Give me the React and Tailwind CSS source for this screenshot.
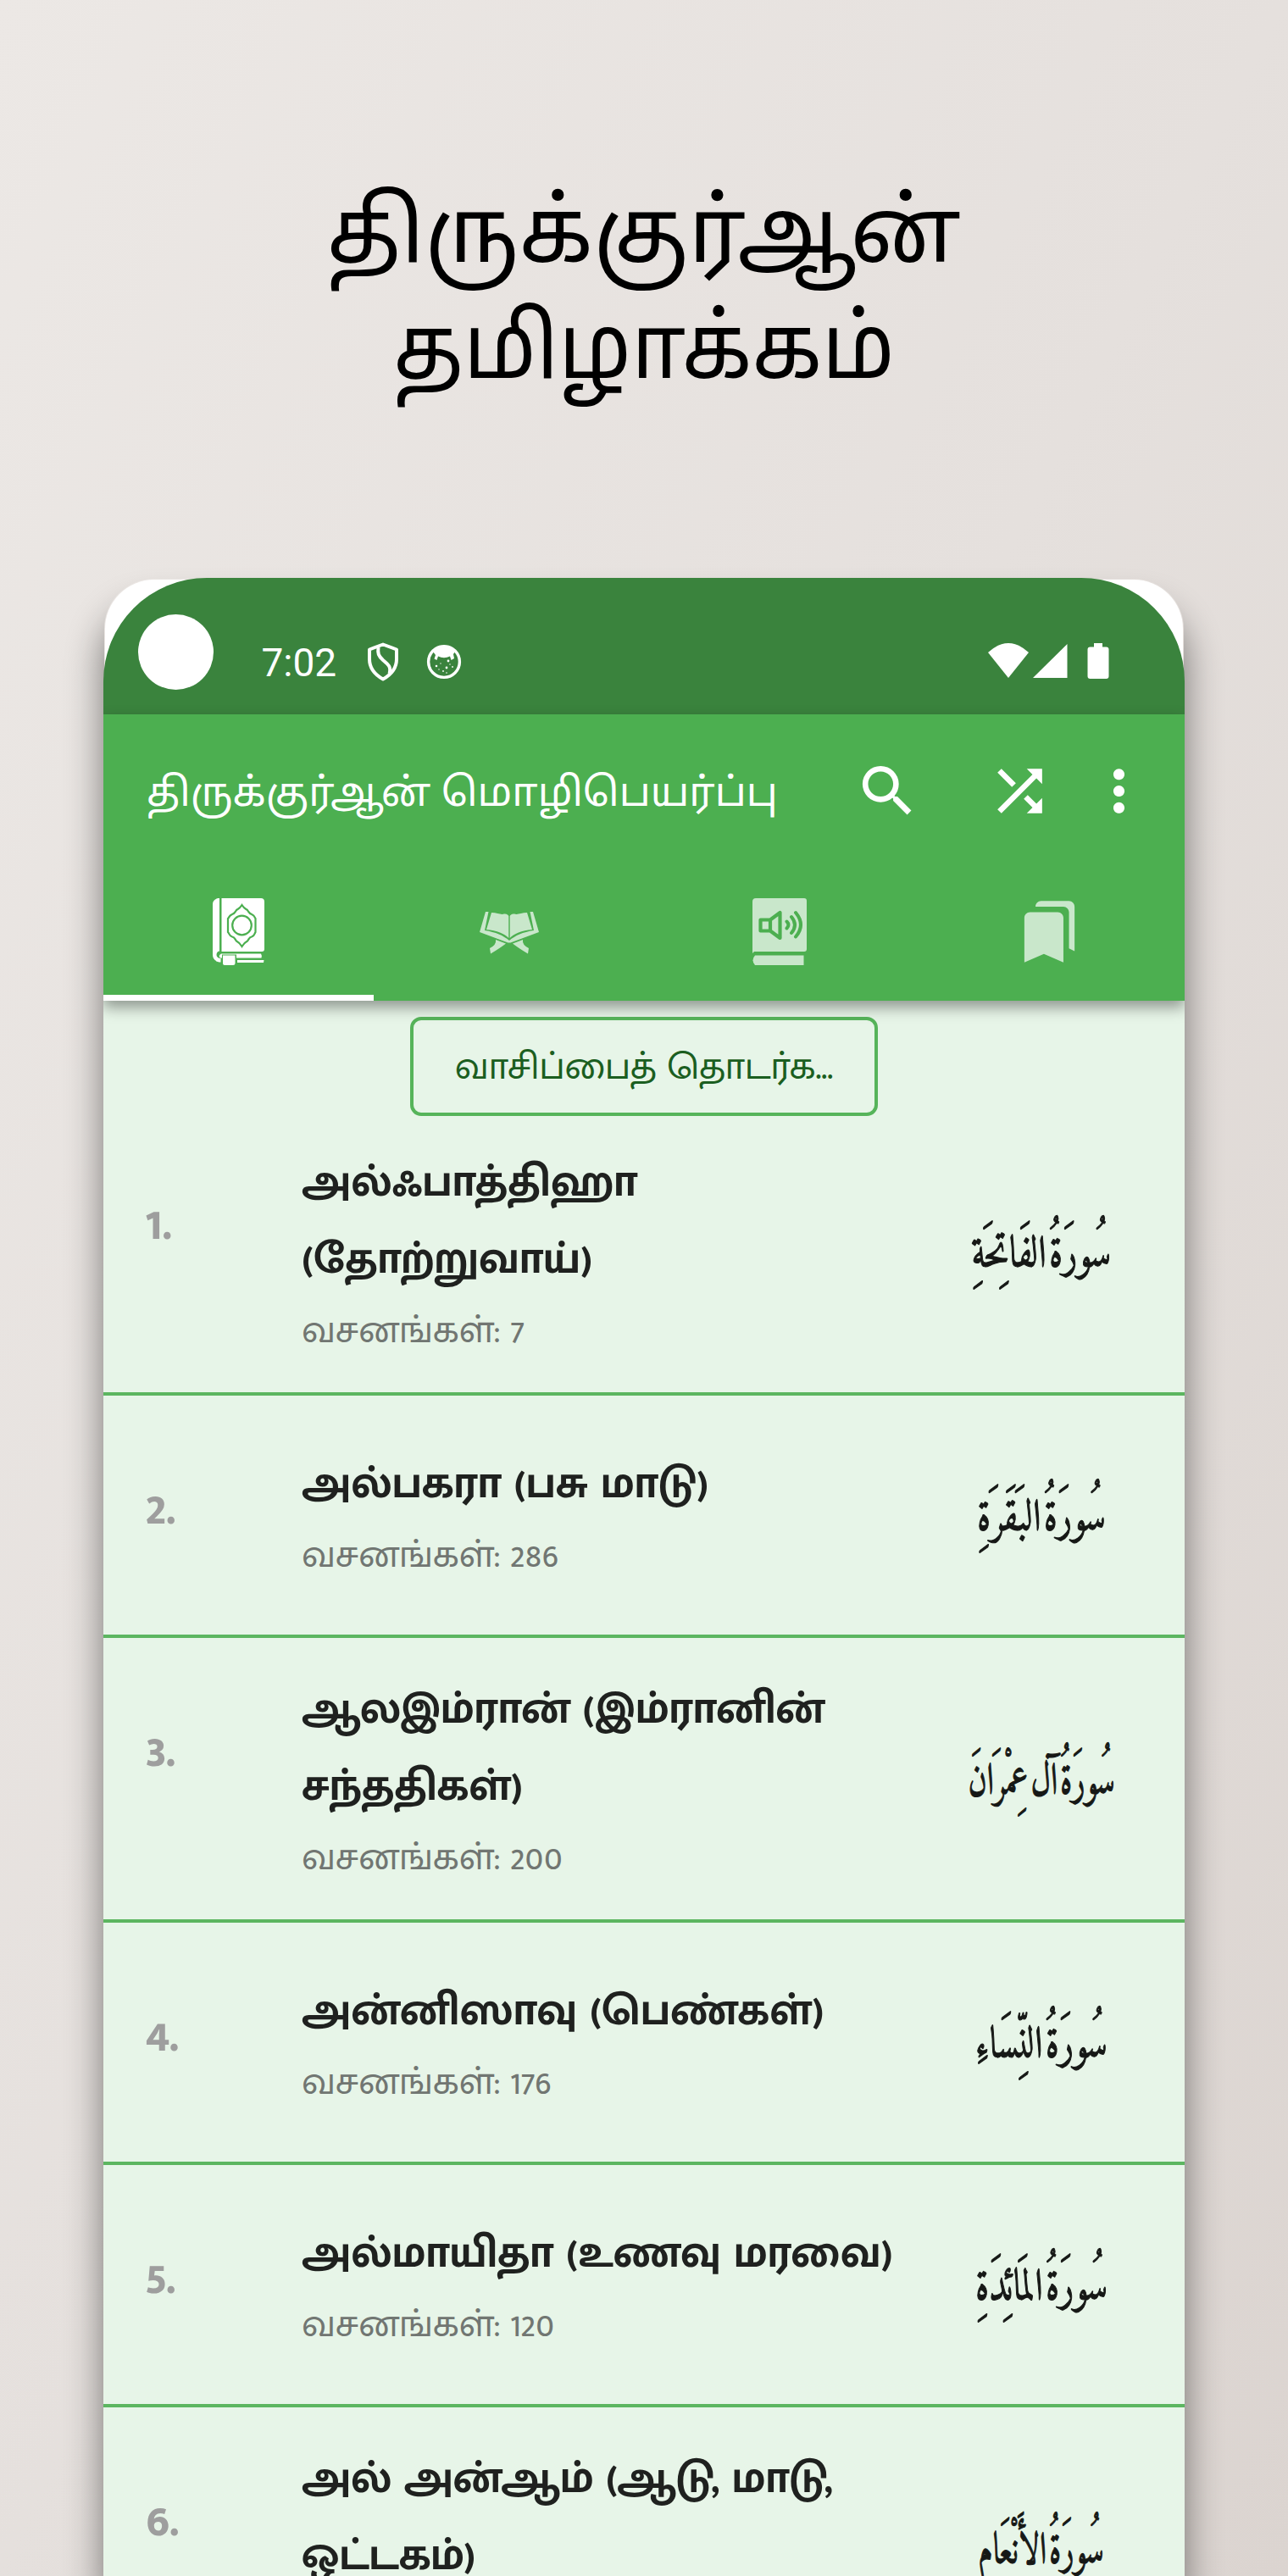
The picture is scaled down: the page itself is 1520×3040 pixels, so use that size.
import { MdBookmarks, MdMoreVert, MdSearch, MdShuffle } from "react-icons/md";

const surahs = [
  { no: 1, name: ["அல்ஃபாத்திஹா", "(தோற்றுவாய்)"], verses: 7, arabic: "سُورَةُ الفَاتِحَةِ" },
  { no: 2, name: ["அல்பகரா (பசு மாடு)"], verses: 286, arabic: "سُورَةُ البَقَرَةِ" },
  { no: 3, name: ["ஆலஇம்ரான் (இம்ரானின்", "சந்ததிகள்)"], verses: 200, arabic: "سُورَةُ آل عِمْرَانَ", narrow: true },
  { no: 4, name: ["அன்னிஸாவு (பெண்கள்)"], verses: 176, arabic: "سُورَةُ النِّسَاءِ" },
  { no: 5, name: ["அல்மாயிதா (உணவு மரவை)"], verses: 120, arabic: "سُورَةُ المَائِدَةِ" },
  { no: 6, name: ["அல் அன்ஆம் (ஆடு, மாடு,", "ஒட்டகம்)"], verses: 165, arabic: "سُورَةُ الأَنْعَامِ", narrow: true },
];

function ShieldIcon() {
  return (
    <svg width="38" height="46" viewBox="0 0 38 46" fill="none" stroke="white" strokeWidth="4" strokeLinejoin="round">
      <path d="M19 2.500 35 8.500V20C35 31 28 38.500 19 43.500 10 38.500 3 31 3 20V8.500Z" />
      <path d="M13.500 6C12.500 13 13.500 16 19 21C25 26 29 29 26.500 37" />
    </svg>
  );
}

function FaceIcon() {
  return (
    <svg width="42" height="42" viewBox="0 0 42 42">
      <circle cx="21" cy="21" r="18.4" fill="none" stroke="white" strokeWidth="3.4" />
      <path d="M8 9C14 1 28 1 34 9L32 12 33 17 29.500 19 28 14.500Q21 18 14 14.500L12.500 19 9.500 17.500 11 13Z" fill="white" />
      <g fill="white">
        <circle cx="12" cy="26" r="1.300" /><circle cx="17" cy="23" r=".7" /><circle cx="26" cy="20" r="1.400" />
        <circle cx="24" cy="28" r="1.400" /><circle cx="31" cy="27" r=".9" /><circle cx="20" cy="32" r=".9" />
        <circle cx="15" cy="30" r=".7" /><circle cx="28" cy="24" r=".7" /><circle cx="24" cy="34" r=".8" />
      </g>
    </svg>
  );
}

function QuranIcon() {
  return (
    <svg width="61" height="79" viewBox="0 0 61 79">
      <path d="M8 0C3 0 0 3 0 7V67C0 72 4 75.500 9.500 75.500V71C6.500 71 4.500 69 4.500 67 4.500 64 6 62.500 8 62.500Z" fill="white" />
      <path d="M10.500 0H57C59.500 0 61 1.500 61 4V60Q61 63 58 63H10.500Z" fill="white" />
      <path d="M10 65.500H57Q58.500 68 57.500 70.500H28V66.500H11V70.500H9Q6 68 10 65.500Z" fill="white" />
      <path d="M12 67.500H26.500V77Q26.500 79 24 79H14Q12 79 12 77Z" fill="white" />
      <path d="M29 73H60.500L60 76H29Z" fill="white" />
      <path d="M34.500 8C37 12 38 12 41 14 43 17 43 18 46 19 50 21 49 22 50.500 24V40C49 42 50 44 46 45.500 43 46 43 48 41 50.500 38 52 37 53 34.500 57 32 53 31 52 28 50.500 26 48 26 46 23 45.500 19 44 20 42 18 40V24C20 22 19 21 23 19 26 18 26 17 28 14 31 12 32 12 34.500 8Z" fill="none" stroke="#4caf50" strokeWidth="2.200" />
      <circle cx="34.500" cy="32" r="11.300" fill="none" stroke="#4caf50" strokeWidth="2.200" />
    </svg>
  );
}

function StandIcon() {
  return (
    <svg width="70" height="50" viewBox="0 0 70 50" fill="#c9e7cb">
      <path d="M14 1C21 1 25 4 29 2.500 32 2 34 4 34.300 5V31C30 26 20 22 8 21Z" />
      <path d="M56 1C49 1 45 4 41 2.500 38 2 36 4 35.700 5V31C40 26 50 22 62 21Z" />
      <path d="M7 0H10.500L6 22C19 24 28 28 35 34 42 28 51 24 64 22L59.500 0H63L70 24 36.500 36.500H33.500L0 24Z" />
      <path d="M19 33 31 37.500Q24 43 13 49.500L12 43Q20 39 19 33Z" />
      <path d="M51 33 39 37.500Q46 43 57 49.500L58 43Q50 39 51 33Z" />
    </svg>
  );
}

function AudioBookIcon() {
  return (
    <svg width="64" height="79" viewBox="0 0 64 79">
      <path d="M4 0H61Q64 0 64 3V60Q64 63 61 63H2L0 65V4Q0 0 4 0Z" fill="#c9e7cb" />
      <path d="M3 67.500H60.500V79H3Q-2 73 3 67.500Z" fill="#c9e7cb" />
      <g fill="none" stroke="#4caf50" strokeWidth="4.200" strokeLinejoin="round" strokeLinecap="round">
        <path d="M9.500 25.500H21V38.500H9.500ZM21 25.500 32.500 17V47L21 38.500" />
        <path d="M40.500 27.500Q44.500 31.500 40.500 35.500M46 22Q54 31.500 46 41M51 17Q63 31.500 51 45.500" strokeWidth="4" />
      </g>
    </svg>
  );
}

function StatusBar() {
  return (
    <div className="flex h-[161px] items-start bg-[#3a833d] pl-[18.5px] pr-[88px]">
      <div className="ml-[22px] mt-[42.5px] size-[89px] rounded-full bg-white" />
      <span className="ml-[57px] mt-[75px] w-[90px] font-[Roboto] text-[46px] leading-[50px] text-white">7:02</span>
      <div className="ml-[34px] mt-[76px]"><ShieldIcon /></div>
      <div className="ml-[32px] mt-[78px]"><FaceIcon /></div>
      <svg className="ml-auto mt-[77px]" width="147" height="43" viewBox="0 0 147 43" fill="white">
        <path d="M3 11Q27-11 51 11L27 41Z" />
        <path d="M96.500 1V41H56Z" />
        <path d="M128 0H138V4.500H142.500Q145.500 4.500 145.500 7.500V39Q145.500 42 142.500 42H123.500Q120.500 42 120.500 39V7.500Q120.500 4.500 123.500 4.500H128Z" />
      </svg>
    </div>
  );
}

function AppBar() {
  return (
    <header className="relative z-10 bg-[#4caf50] shadow-[0_8px_16px_rgba(0,0,0,0.38)]">
      <div className="flex h-[181px] items-center text-white">
        <h1 className="ml-[51px] w-[835px] whitespace-nowrap pt-[12px] font-['Noto_Sans_Tamil'] text-[47.500px] leading-[60px]">திருக்குர்ஆன் மொழிபெயர்ப்பு</h1>
        <MdSearch size={79} />
        <MdShuffle size={79} className="ml-[77px]" />
        <MdMoreVert size={79} className="ml-[38px]" />
      </div>
      <nav className="grid h-[157px] grid-cols-4">
        <div className="flex justify-center border-b-[7px] border-white pt-[36px]"><QuranIcon /></div>
        <div className="flex justify-center pt-[52px]"><StandIcon /></div>
        <div className="flex justify-center pt-[36px]"><AudioBookIcon /></div>
        <div className="flex justify-center pt-[36px] text-[#c9e7cb]"><MdBookmarks size={79} /></div>
      </nav>
    </header>
  );
}

function SurahRow({ surah }) {
  const tall = surah.name.length > 1;
  return (
    <li className={`flex shrink-0 border-b-4 border-[#5cb660] font-['Mukta_Malar'] ${tall ? "h-[336px]" : "h-[286px]"}`}>
      <span className="ml-[50px] w-[184px] pt-[87px] text-[61px] font-bold leading-[91px] text-[#9e9e9e]">{surah.no}.</span>
      <div className={`w-[740px] whitespace-nowrap ${tall ? "pt-[39px]" : "pt-[59px]"}`}>
        <div className={`text-[53px] font-bold leading-[91px] text-[#1f211f] ${surah.narrow ? "tracking-[-0.3px]" : ""}`}>
          {surah.name.map((line) => <div key={line}>{line}</div>)}
        </div>
        <div className="text-[45.400px] leading-[78px] text-[#717672]">வசனங்கள்: {surah.verses}</div>
      </div>
      <span dir="rtl" className="flex w-[266px] items-center justify-center whitespace-nowrap pt-[10px] font-[Amiri] text-[46px] leading-[100px] text-[#161816] [word-spacing:-10px] [-webkit-text-stroke:1px]">
        <span className={surah.narrow ? "inline-block scale-x-[.84] scale-y-115" : "inline-block scale-x-[.95] scale-y-115"}>{surah.arabic}</span>
      </span>
    </li>
  );
}

export default function App() {
  return (
    <main className="flex h-[3040px] w-[1520px] flex-col items-center overflow-hidden bg-linear-to-br from-[#ece8e5] via-[#e5e0dd] to-[#dbd4d0]">
      <h2 className="h-[682px] pt-[214px] text-center font-['Noto_Sans_Tamil'] text-[106px] leading-[137px] text-black">
        <span className="block">திருக்குர்ஆன்</span>
        <span className="block scale-x-[.945]">தமிழாக்கம்</span>
      </h2>
      <div className="w-[1276px] rounded-t-[60px] border-2 border-b-0 border-transparent bg-white bg-clip-padding shadow-[0_36px_44px_rgba(0,0,0,0.48)]">
        <div className="-mx-[2px] -mt-[2px] h-[2358px] overflow-hidden rounded-t-[122px]">
          <StatusBar />
          <AppBar />
          <section className="h-[2020px] bg-[#e7f5e8]">
            <div className="flex h-[130px] justify-center pt-[19px]">
              <button className="h-[117px] w-[552px] rounded-[13px] border-4 border-[#56b45a] pt-[4px] font-['Mukta_Malar'] text-[45.400px] text-[#1b5e20]">வாசிப்பைத் தொடர்க...</button>
            </div>
            <ul className="flex flex-col">
              {surahs.map((s) => <SurahRow key={s.no} surah={s} />)}
            </ul>
          </section>
        </div>
      </div>
    </main>
  );
}
